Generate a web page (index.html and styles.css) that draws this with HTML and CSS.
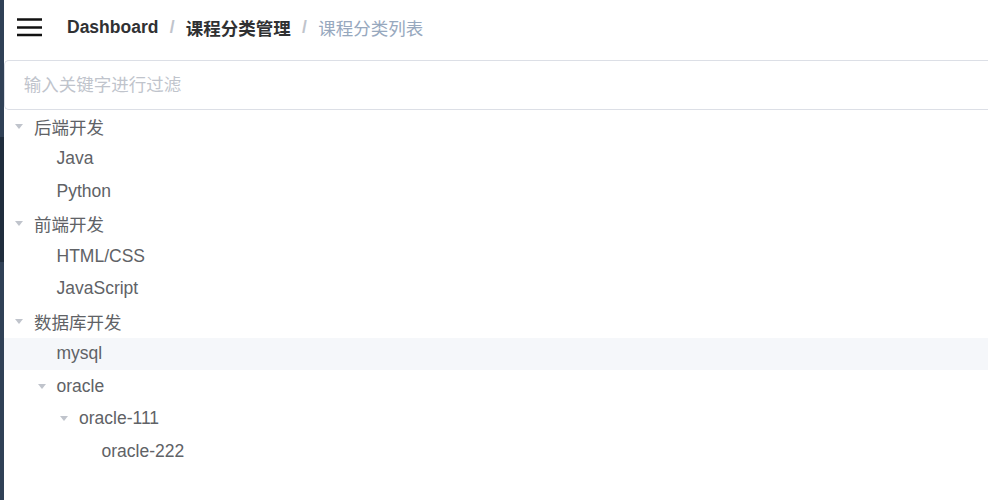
FILE: index.html
```html
<!DOCTYPE html>
<html lang="zh-CN">
<head>
  <meta charset="UTF-8">
  <meta name="viewport" content="width=device-width, initial-scale=1.0">
  <title>课程分类列表</title>
  <link rel="stylesheet" href="styles.css">
</head>
<body>

  <div class="app-wrapper">
    <div class="sidebar">
      <div class="sidebar-top"></div>
      <div class="sidebar-sub"></div>
      <div class="sidebar-rest"></div>
    </div>

    <div class="main-container">
      <div class="navbar">
        <div class="hamburger-container">
          <svg class="hamburger" width="25" height="25" viewBox="0 0 25 25">
            <line x1="0.5" y1="4.5" x2="24.5" y2="4.5" />
            <line x1="0.5" y1="12.5" x2="24.5" y2="12.5" />
            <line x1="0.5" y1="20" x2="24.5" y2="20" />
          </svg>
        </div>

        <div class="breadcrumb">
          <span class="crumb crumb-link">Dashboard</span>
          <span class="crumb-sep">/</span>
          <span class="crumb crumb-link">课程分类管理</span>
          <span class="crumb-sep">/</span>
          <span class="crumb no-redirect">课程分类列表</span>
        </div>
      </div>

      <div class="app-main">
        <div class="filter-input">
          <input type="text" placeholder="输入关键字进行过滤" />
        </div>

        <div class="tree">
          <div class="tree-node level-1"><span class="expand-icon"></span><span class="node-label">后端开发</span></div>
          <div class="tree-node level-2"><span class="expand-icon is-leaf"></span><span class="node-label">Java</span></div>
          <div class="tree-node level-2"><span class="expand-icon is-leaf"></span><span class="node-label">Python</span></div>
          <div class="tree-node level-1"><span class="expand-icon"></span><span class="node-label">前端开发</span></div>
          <div class="tree-node level-2"><span class="expand-icon is-leaf"></span><span class="node-label">HTML/CSS</span></div>
          <div class="tree-node level-2"><span class="expand-icon is-leaf"></span><span class="node-label">JavaScript</span></div>
          <div class="tree-node level-1"><span class="expand-icon"></span><span class="node-label">数据库开发</span></div>
          <div class="tree-node level-2 is-hover"><span class="expand-icon is-leaf"></span><span class="node-label">mysql</span></div>
          <div class="tree-node level-2"><span class="expand-icon"></span><span class="node-label">oracle</span></div>
          <div class="tree-node level-3"><span class="expand-icon"></span><span class="node-label">oracle-111</span></div>
          <div class="tree-node level-4"><span class="expand-icon is-leaf"></span><span class="node-label">oracle-222</span></div>
        </div>
      </div>
    </div>
  </div>

</body>
</html>
```

FILE: styles.css
```css
body {
  margin: 0;
  font-family: "Liberation Sans", "Noto Sans CJK SC", sans-serif;
  background: #fff;
  overflow: hidden;
}

.app-wrapper {
  display: flex;
  min-height: 500px;
}

.sidebar {
  width: 4px;
  display: flex;
  flex-direction: column;
}

.sidebar-top {
  height: 137px;
  background-color: #304156;
}

.sidebar-sub {
  height: 125px;
  background-color: #1f2d3d;
}

.sidebar-rest {
  flex: 1;
  background-color: #304156;
}

.main-container {
  flex: 1;
  min-width: 0;
}

/* navbar */
.navbar {
  height: 60px;
  padding-bottom: 6px;
  box-sizing: border-box;
  display: flex;
  align-items: center;
}

.hamburger-container {
  padding-left: 13px;
  display: flex;
  align-items: center;
}

.hamburger line {
  stroke: #111;
  stroke-width: 2.6;
  stroke-linecap: round;
}

.breadcrumb {
  margin-left: 25px;
  font-size: 17.5px;
  display: flex;
  align-items: center;
}

.crumb-link {
  font-weight: 700;
  color: #303133;
}

.crumb-sep {
  margin: 0 11.25px;
  font-weight: 700;
  color: #c0c4cc;
}

.no-redirect {
  color: #97a8be;
}

/* filter */
.filter-input input {
  display: block;
  width: 100%;
  height: 50px;
  box-sizing: border-box;
  padding: 0 18.75px;
  border: 1px solid #dcdfe6;
  border-right: 0;
  border-radius: 5px 0 0 5px;
  font-family: inherit;
  font-size: 17.5px;
  color: #606266;
  outline: none;
}

.filter-input input::placeholder {
  color: #c0c4cc;
}

/* tree */
.tree {
  color: #606266;
  font-size: 17.5px;
}

.tree-node {
  height: 32.5px;
  display: flex;
  align-items: center;
}

.tree-node.is-hover {
  background-color: #f5f7fa;
}

.level-2 { padding-left: 22.5px; }
.level-3 { padding-left: 45px; }
.level-4 { padding-left: 67.5px; }

.expand-icon {
  width: 30px;
  height: 15px;
  display: flex;
  align-items: center;
  justify-content: center;
}

.expand-icon::before {
  content: "";
  border-left: 4.5px solid transparent;
  border-right: 4.5px solid transparent;
  border-top: 5px solid #c0c4cc;
}

.expand-icon.is-leaf::before {
  border-top-color: transparent;
}
```
